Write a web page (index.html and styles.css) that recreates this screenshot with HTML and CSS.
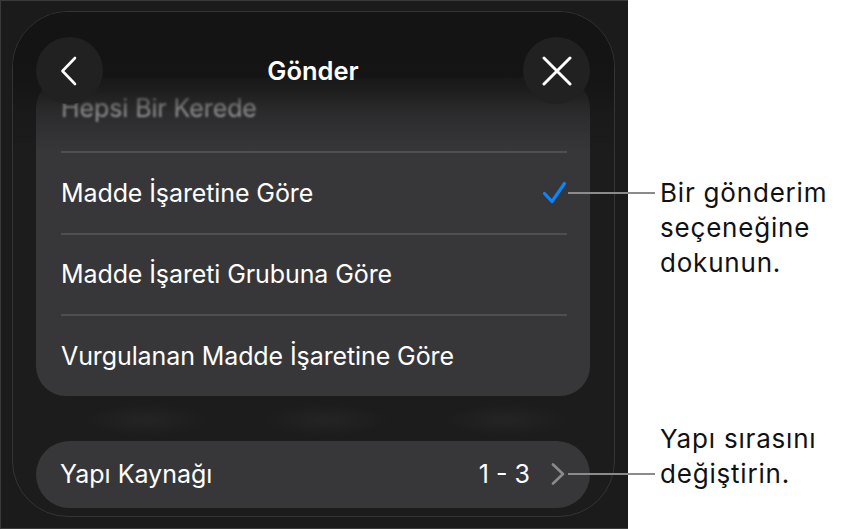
FILE: index.html
```html
<!DOCTYPE html>
<html lang="tr">
<head>
<meta charset="utf-8">
<title>Gönder</title>
<link rel="stylesheet" href="styles.css">
</head>
<body>
<div class="stage">
  <div class="panel">
    <div class="sheet">
      <div class="sheet-body">
        <div class="card">
          <div class="row row-first"><span class="blurred">Hepsi Bir Kerede</span></div>
          <div class="sep"></div>
          <div class="row">
            <span>Madde İşaretine Göre</span>
            <svg class="check" width="26" height="24" viewBox="0 0 26 24"><path d="M2.5 12.5 L10 20.5 L22.5 2.5" fill="none" stroke="#0a84ff" stroke-width="3.2" stroke-linecap="round" stroke-linejoin="round"/></svg>
          </div>
          <div class="sep"></div>
          <div class="row"><span>Madde İşareti Grubuna Göre</span></div>
          <div class="sep"></div>
          <div class="row"><span>Vurgulanan Madde İşaretine Göre</span></div>
        </div>
        <div class="backdrop"></div>
        <div class="pill">
          <span>Yapı Kaynağı</span>
          <span class="pill-end">
            <span class="range">1 - 3</span>
            <svg class="chev" width="14" height="22" viewBox="0 0 14 22"><path d="M2 1.5 L12 11 L2 20.5" fill="none" stroke="#8a8a8e" stroke-width="2.6" stroke-linecap="round" stroke-linejoin="round"/></svg>
          </span>
        </div>
      </div>
      <div class="header">
        <button class="circle" aria-label="Geri">
          <svg width="20" height="30" viewBox="0 0 20 30"><path d="M15 2 L2.5 15 L15 28" fill="none" stroke="#fff" stroke-width="2.6" stroke-linecap="round" stroke-linejoin="round"/></svg>
        </button>
        <div class="title">Gönder</div>
        <button class="circle" aria-label="Kapat">
          <svg width="30" height="30" viewBox="0 0 30 30"><path d="M2 2 L28 28 M28 2 L2 28" fill="none" stroke="#fff" stroke-width="3" stroke-linecap="round"/></svg>
        </button>
      </div>
    </div>
  </div>
  <div class="callout callout-1">
    <div class="lead"></div>
    <div class="note">Bir gönderim<br>seçeneğine<br>dokunun.</div>
  </div>
  <div class="callout callout-2">
    <div class="lead"></div>
    <div class="note">Yapı sırasını<br>değiştirin.</div>
  </div>
</div>
</body>
</html>
```
FILE: styles.css
```css
* { box-sizing: border-box; }
html, body { margin: 0; padding: 0; background: #fff; }
body { font-family: Inter, "Noto Sans", "Liberation Sans", sans-serif; }

.stage {
  position: relative;
  width: 841px;
  height: 529px;
  display: flex;
}

.panel {
  width: 628px;
  height: 529px;
  background: #1b1b1c;
  border: 1px solid #3a3a3a;
  border-right: none;
  padding: 10px 12px 11px 11px;
}

.sheet {
  position: relative;
  width: 603px;
  height: 506px;
  border: 1px solid #343436;
  border-radius: 56px;
  background: #1c1c1d;
  overflow: hidden;
}

.sheet-body {
  display: flex;
  flex-direction: column;
  padding: 66px 24px 0 23px;
}

.card {
  background: #373739;
  border-radius: 30px;
  display: flex;
  flex-direction: column;
}

.row {
  height: 79.5px;
  display: flex;
  align-items: center;
  justify-content: space-between;
  padding: 0 24px 0 25px;
  color: #fff;
  font-size: 25px;
  letter-spacing: -0.1px;
}
.row-first { height: 73px; padding-bottom: 13px; }
.blurred { color: #c9c9cb; filter: blur(1.1px); }

.sep {
  height: 2px;
  background: #4f4f52;
  margin: 0 23px 0 25px;
}

.check { margin-right: -2px; }

.backdrop {
  height: 45px;
  background:
    radial-gradient(ellipse 70px 16px at 110px 24px, rgba(255,255,255,0.045), transparent),
    radial-gradient(ellipse 70px 16px at 290px 24px, rgba(255,255,255,0.045), transparent),
    radial-gradient(ellipse 70px 16px at 470px 24px, rgba(255,255,255,0.045), transparent);
  filter: blur(5px);
}

.pill {
  height: 67px;
  border-radius: 34px;
  background: #373739;
  display: flex;
  align-items: center;
  justify-content: space-between;
  padding: 0 25px 0 24px;
  color: #fff;
  font-size: 25px;
}
.pill-end { display: flex; align-items: center; gap: 21px; }

.header {
  position: absolute;
  top: 0; left: 0; right: 0;
  height: 140px;
  display: flex;
  align-items: flex-start;
  justify-content: space-between;
  padding: 25px 24px 0 23px;
  background: linear-gradient(to bottom,
    #141414 0px, #141414 52px,
    rgba(20,20,20,0.8) 74px,
    rgba(20,20,20,0.35) 100px,
    rgba(20,20,20,0) 140px);
}

.circle {
  width: 67px;
  height: 67px;
  border-radius: 50%;
  border: none;
  background: #212121;
  display: flex;
  align-items: center;
  justify-content: center;
  padding: 0;
}

.title {
  color: #fff;
  font-size: 25.5px;
  font-weight: 600;
  line-height: 67px;
}

.callout {
  position: absolute;
  left: 568px;
  display: flex;
  align-items: flex-start;
}
.callout-1 { top: 175px; }
.callout-2 { top: 421px; }
.lead {
  width: 87px;
  height: 2px;
  background: #8b8b8b;
  margin-right: 5px;
}
.callout-1 .lead { margin-top: 17px; }
.callout-2 .lead { margin-top: 52px; }
.note {
  color: #111;
  font-size: 26px;
  letter-spacing: 0.8px;
  line-height: 35px;
}
```
